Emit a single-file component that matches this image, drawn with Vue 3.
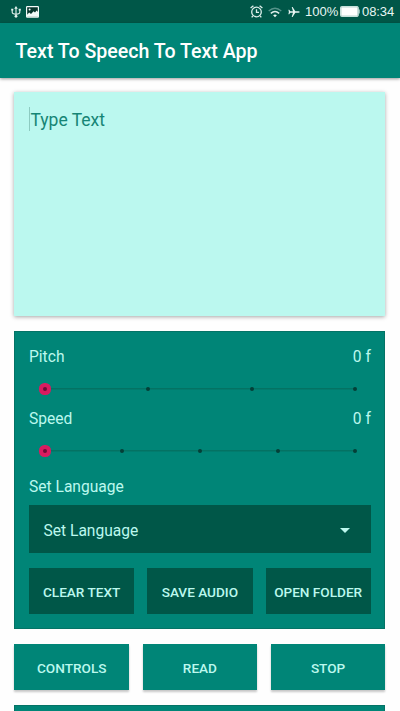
<script setup>
const sliders = [
  { label: 'Pitch', value: '0 f', ticks: 4 },
  { label: 'Speed', value: '0 f', ticks: 5 }
]
const fileActions = ['CLEAR TEXT', 'SAVE AUDIO', 'OPEN FOLDER']
const playActions = ['CONTROLS', 'READ', 'STOP']
</script>

<template>
  <div class="screen">
    <div class="status">
      <svg class="usb" width="10" height="12" viewBox="0 0 10 12" fill="none" stroke="#e4f3ef" stroke-width="1.1">
        <path d="M5 2V10M1.2 4V6.2Q1.2 8 5 8.3Q8.8 8 8.8 6.2V4" />
        <path d="M5 0L6.8 2.7H3.2Z" fill="#e4f3ef" stroke="none" />
        <circle cx="5" cy="10.3" r="1.4" fill="#e4f3ef" stroke="none" />
        <path d="M0.2 3.6H2.3M7.7 3.6H9.8" stroke-width="1.8" />
      </svg>
      <svg class="photo" width="13" height="12" viewBox="0 0 13 12">
        <rect x="0.6" y="0.6" width="11.8" height="10.6" rx="0.6" fill="#07352c" stroke="#f2faf8" stroke-width="1.2" />
        <path d="M1 10.8V8.8L3.2 6.6L5 8L7.6 5.2L9 6.4L10.6 4.4L12 6V10.8Z" fill="#f2faf8" />
        <circle cx="3.6" cy="3.5" r="1" fill="#f2faf8" />
      </svg>
      <span class="spacer"></span>
      <svg class="alarm" width="13" height="13" viewBox="0 0 13 13" fill="none" stroke="#dceeea" stroke-width="1.3">
        <circle cx="6.5" cy="7" r="4.8" />
        <path d="M6.5 4.3V7.4H9M0.6 3.1L3.4 0.8M12.4 3.1L9.6 0.8M2.8 11L1.7 12.3M10.2 11L11.3 12.3" />
      </svg>
      <svg class="wifi" width="14" height="11" viewBox="0 0 14 11" fill="none" stroke-width="1.4">
        <path d="M0.7 4Q7-1.4 13.3 4" stroke="#56938a" />
        <path d="M2.8 6.4Q7 2.7 11.2 6.4" stroke="#e0f0ed" />
        <path d="M5.1 8.2Q7 6.8 8.9 8.2L7 10.3Z" fill="#e8f6f3" stroke="none" />
      </svg>
      <svg class="plane" width="12" height="12" viewBox="0 0 12 12" fill="#e8f6f3">
        <path d="M11.8 6Q11.6 5.3 10.5 5.3H7.3L4.6 0.9H3.7L5 5.3H2.3L1.2 3.8H0.4L0.9 6L0.4 8.2H1.2L2.3 6.7H5L3.7 11.1H4.6L7.3 6.7H10.5Q11.6 6.7 11.8 6Z" />
      </svg>
      <span class="percent">100%</span>
      <svg class="battery" width="20" height="11" viewBox="0 0 20 11">
        <rect x="0.5" y="0.5" width="17.8" height="10" rx="1" fill="#8cb8af" stroke="#d6ebe6" stroke-width="0.9" />
        <rect x="1.3" y="1.3" width="16.2" height="8.4" fill="#fff" />
        <path d="M18.7 3.4H19.6V7.6H18.7Z" fill="#e8f6f3" />
      </svg>
      <span class="clock">08:34</span>
    </div>

    <header class="appbar"><h1>Text To Speech To Text App</h1></header>

    <main>
      <div class="editor"><span class="caret"></span><span class="hint">Type Text</span></div>

      <section class="panel">
        <div v-for="s in sliders" :key="s.label" class="setting">
          <div class="labels"><span>{{ s.label }}</span><span>{{ s.value }}</span></div>
          <div class="track">
            <i v-for="n in s.ticks" :key="n" class="tick" :class="{ thumb: n === 1 }"></i>
          </div>
        </div>
        <div class="lang-label">Set Language</div>
        <div class="select">
          <span>Set Language</span>
          <svg width="10" height="5" viewBox="0 0 10 5"><path d="M0 0H10L5 5Z" fill="#bcf8ee" /></svg>
        </div>
        <div class="file-actions">
          <button v-for="a in fileActions" :key="a">{{ a }}</button>
        </div>
      </section>

      <div class="play-actions">
        <button v-for="a in playActions" :key="a">{{ a }}</button>
      </div>

      <section class="next"></section>
    </main>
  </div>
</template>

<style>
body {
  overflow: hidden;
  background: #fff;
}
</style>

<style scoped>
.screen {
  width: 400px;
  height: 711px;
  overflow: hidden;
  box-sizing: border-box;
  background: #fefefe;
  font-family: Roboto, sans-serif;
  color: #bcf8ee;
}
.status {
  height: 23px;
  display: flex;
  align-items: center;
  box-sizing: border-box;
  padding: 0 6px 0 11px;
  background: #005748;
  color: #e8f6f3;
  font: 13px/23px "Liberation Sans", sans-serif;
}
.status svg {
  flex: none;
}
.photo {
  margin-left: 5px;
}
.spacer {
  flex: 1;
}
.wifi {
  margin: 1px 0 0 5px;
}
.plane {
  margin-left: 6px;
}
.percent {
  width: 33px;
  margin-left: 5px;
  white-space: nowrap;
}
.battery {
  margin-left: 2px;
}
.clock {
  width: 32px;
  margin-left: 2px;
  letter-spacing: -0.1px;
}
.appbar {
  height: 54.5px;
  display: flex;
  align-items: center;
  padding-left: 15.5px;
  background: #008577;
  box-shadow: 0 1px 3px rgba(0, 0, 0, 0.4);
}
h1 {
  margin: 4px 0 0;
  font-size: 19.6px;
  font-weight: 500;
  line-height: 24px;
  color: #fff;
  white-space: nowrap;
}
main {
  padding: 14.5px 14.6px 0 14.4px;
}
.editor {
  height: 224px;
  display: flex;
  box-sizing: border-box;
  padding: 15px 14.5px;
  background: #bbf8ef;
  color: #168575;
  font-size: 17.5px;
  line-height: 24px;
  box-shadow: 0 1px 4px rgba(0, 0, 0, 0.35);
}
.caret {
  width: 1px;
  height: 24px;
  margin-right: 0.6px;
  background: #8dcbc1;
}
.hint {
  padding-top: 1px;
}
.panel {
  height: 298.4px;
  margin-top: 14.6px;
  box-sizing: border-box;
  padding: 14px 13.6px 13px;
  border: 1px solid #047366;
  background: #008577;
}
.setting {
  height: 62.5px;
}
.labels {
  display: flex;
  justify-content: space-between;
  padding-top: 1px;
  font-size: 15.6px;
  line-height: 21px;
}
.track {
  height: 18px;
  margin: 12px 13.4px 0 13.6px;
  display: flex;
  align-items: center;
  justify-content: space-between;
  background: linear-gradient(#047263, #047263) center / calc(100% - 4px) 1.5px no-repeat;
}
.tick {
  width: 4px;
  height: 4px;
  border-radius: 50%;
  background: #043f37;
}
.thumb {
  background: #6b0b36;
  box-shadow: 0 0 0 4px #d81b60;
}
.lang-label {
  margin-top: 6.6px;
  font-size: 15.6px;
  line-height: 21px;
}
.select {
  height: 48.4px;
  display: flex;
  align-items: center;
  justify-content: space-between;
  margin-top: 6.6px;
  box-sizing: border-box;
  padding: 4px 21px 0 14.5px;
  background: #005748;
  font-size: 15.6px;
}
button {
  padding: 2px 0 0;
  border: 0;
  color: #bcf8ee;
  font: 500 13.6px/20px Roboto, sans-serif;
  white-space: nowrap;
}
.file-actions {
  height: 46.6px;
  display: grid;
  grid-template-columns: repeat(3, 1fr);
  gap: 13px;
  margin-top: 14.6px;
}
.file-actions button {
  background: #005748;
}
.play-actions {
  height: 46.4px;
  display: grid;
  grid-template-columns: repeat(3, 1fr);
  gap: 13.5px;
  margin-top: 14.6px;
}
.play-actions button {
  background: #008577;
  box-shadow: 0 2px 2px rgba(0, 0, 0, 0.22);
}
.next {
  height: 20px;
  margin-top: 14.8px;
  background: #008577;
  border: 1px solid #047366;
}
</style>
